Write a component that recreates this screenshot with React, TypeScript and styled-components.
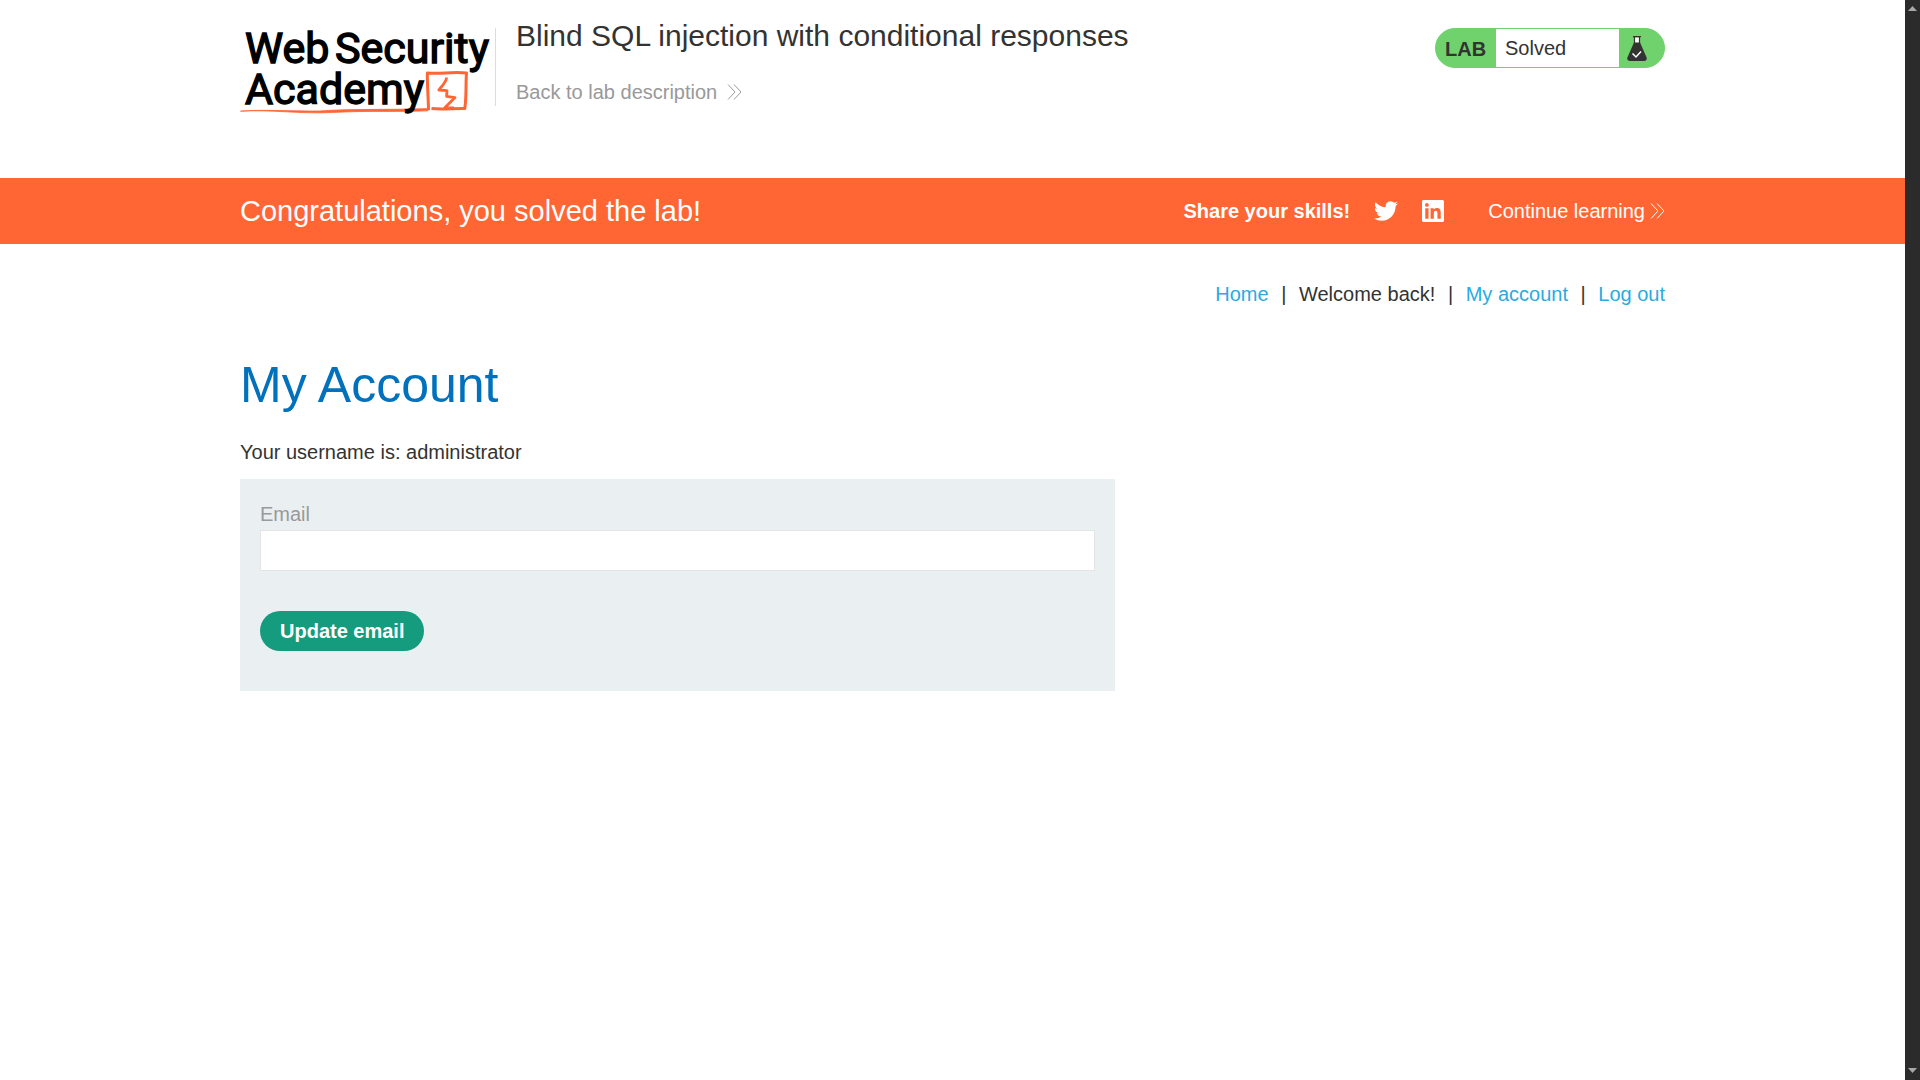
import React from "react";
import styled, { createGlobalStyle } from "styled-components";

const ink = "#333332";
const orange = "#ff6633";
const green = "#70d26c";
const skyBlue = "#29abe2";

const GlobalStyle = createGlobalStyle`
  *, *::before, *::after { box-sizing: border-box; }
  body {
    margin: 0;
    background: #fff;
    color: ${ink};
    font: 20px/30px "Liberation Sans", Arial, sans-serif;
  }
`;

const Shell = styled.div`
  display: grid;
  grid-template-columns: minmax(0, 1fr) 15px;
  min-height: 100vh;
`;

const Page = styled.div`
  min-width: 0;
`;

const Container = styled.div`
  max-width: 1425px;
  margin: 0 auto;
`;

const Header = styled(Container).attrs({ as: "header" })`
  display: flex;
  align-items: flex-start;
  padding: 18px 0 62px;
`;

const LogoLink = styled.a`
  display: flex;
  flex: none;
  margin-top: 10px;
`;

const LogoText = styled.text`
  font-family: Roboto, "Open Sans", sans-serif;
  font-size: 43px;
  fill: #000;
  stroke: #000;
  stroke-width: 1.4px;
`;

const TitleArea = styled.div`
  flex: 1;
  display: flex;
  margin-left: 5px;
`;

const Divider = styled.span`
  width: 1px;
  height: 78px;
  margin: 10px 20px 0 0;
  background: #dcdcdc;
`;

const Titles = styled.div`
  display: flex;
  flex-direction: column;
  align-items: flex-start;
  gap: 23px;
`;

const LabTitle = styled.h2`
  margin: 0;
  font-size: 30px;
  line-height: 36px;
  font-weight: 400;
`;

const BackLink = styled.a`
  display: flex;
  align-items: center;
  gap: 10px;
  color: #999;
  text-decoration: none;
`;

const Status = styled.div`
  display: flex;
  width: 230px;
  height: 40px;
  margin-top: 10px;
  border: 1px solid ${green};
  border-radius: 20px;
  background: ${green};
  overflow: hidden;
  line-height: 38px;
`;

const StatusTag = styled.strong`
  width: 60px;
  padding-left: 9px;
  line-height: 40px;
`;

const StatusText = styled.span`
  flex: 1;
  padding-left: 9px;
  background: #fff;
`;

const StatusIcon = styled.span`
  width: 45px;
  padding: 7px 0 0 8px;
  line-height: 0;
`;

const Banner = styled.section`
  background: ${orange};
  color: #fff;
`;

const BannerRow = styled(Container)`
  display: flex;
  align-items: center;
  justify-content: space-between;
  min-height: 66px;
`;

const BannerTitle = styled.h4`
  margin: 0;
  font-size: 29px;
  line-height: 36px;
  font-weight: 400;
`;

const Share = styled.div`
  display: flex;
  align-items: center;
`;

const SocialLink = styled.a`
  display: flex;
  margin-left: 24px;
  color: #fff;
`;

const ContinueLink = styled.a`
  display: flex;
  align-items: center;
  gap: 5px;
  margin-left: 44px;
  color: #fff;
  text-decoration: none;
`;

const Nav = styled(Container).attrs({ as: "nav" })`
  padding-top: 35px;
  text-align: right;
`;

const NavLink = styled.a`
  color: ${skyBlue};
  text-decoration: none;
`;

const Separator = styled.span`
  margin: 0 7px;
`;

const Main = styled(Container).attrs({ as: "main" })`
  padding-top: 46px;
`;

const Heading = styled.h1`
  margin: 0;
  color: #0071bc;
  font-size: 50px;
  line-height: 60px;
  font-weight: 400;
`;

const Username = styled.p`
  margin: 22px 0 12px;
`;

const Form = styled.form`
  display: flex;
  flex-direction: column;
  align-items: flex-start;
  max-width: 875px;
  padding: 20px 20px 40px;
  background: #eaeff2;
`;

const Label = styled.label`
  color: #999;
`;

const EmailInput = styled.input`
  width: 100%;
  height: 41px;
  margin: 1px 0 40px;
  padding: 0 10px;
  border: 1px solid #e4e4e4;
  background: #fff;
  color: ${ink};
  font: inherit;
`;

const SubmitButton = styled.button`
  height: 40px;
  padding: 0 20px;
  border: 0;
  border-radius: 20px;
  background: #159b7e;
  color: #fff;
  font: inherit;
  font-weight: 700;
  cursor: pointer;
`;

const ScrollRail = styled.aside`
  position: sticky;
  top: 0;
  display: flex;
  flex-direction: column;
  align-items: center;
  justify-content: space-between;
  height: 100vh;
  padding: 6px 0 7px;
  background: #2b2b2b;
`;

function Logo() {
  return (
    <svg width="250" height="88" viewBox="0 0 250 88" role="img" aria-label="Web Security Academy">
      <path d="M0.5 83.2 C30 81.4 60 86 90 84.6 C130 82.4 160 84.2 188 82.8 L188 80.6 C150 82 110 80.6 80 83 C50 83.4 20 81.2 0.5 83.2Z" fill={orange} stroke={orange} strokeWidth=".8" />
      <path d="M188.5 82 C188.3 68 187 55 187.4 45 C200 46 214 43.6 226.5 45 C225.6 57 226.6 68 224.8 80.6 C214 80.4 202 81.6 191.5 80.6" fill="none" stroke={orange} strokeWidth="3" strokeLinejoin="round" />
      <path d="M206.5 49.5 C206.5 54 202 58 198.8 62 L207 62.6 L206.6 68.4 L215 69.6 L205 79.6 L214 80" fill="none" stroke={orange} strokeWidth="2.8" strokeLinejoin="round" />
      <LogoText x="5" y="35">Web</LogoText>
      <LogoText x="95" y="35">Security</LogoText>
      <LogoText x="5" y="76">Academy</LogoText>
    </svg>
  );
}

function Chevrons() {
  return (
    <svg width="15" height="16" viewBox="0 0 15 16" fill="none" stroke="currentColor" strokeWidth="1" aria-hidden="true">
      <path d="M1 .5 8 8 1 15.5M7 .5 14 8 7 15.5" />
    </svg>
  );
}

function Flask() {
  return (
    <svg width="20" height="25" viewBox="0 0 20 25" aria-hidden="true">
      <path d="M7.5 1.5H12.5V7H7.5Z" fill="#fff" />
      <path d="M6 .7H14M7.5 1V8M12.5 1V8" stroke={ink} strokeWidth="1.2" fill="none" />
      <path d="M7 6.5H13L19.6 21.5Q20.4 25 17.5 25H2.5Q-.4 25 .4 21.5Z" fill={ink} />
      <path d="M5.5 17.5 9 21 14 15.5" stroke="#fff" strokeWidth="1.5" fill="none" />
    </svg>
  );
}

function Twitter() {
  return (
    <svg width="24" height="24" viewBox="0 0 24 24" fill="currentColor" aria-hidden="true">
      <path d="M23.95 4.57a10 10 0 0 1-2.82.77 4.96 4.96 0 0 0 2.16-2.72c-.95.55-2 .95-3.13 1.18a4.92 4.92 0 0 0-8.38 4.48C7.69 8.09 4.07 6.13 1.64 3.16a4.82 4.82 0 0 0-.67 2.48c0 1.71.87 3.21 2.19 4.1a4.9 4.9 0 0 1-2.23-.62v.06a4.92 4.92 0 0 0 3.95 4.83 5 5 0 0 1-2.21.08 4.94 4.94 0 0 0 4.6 3.42A9.87 9.87 0 0 1 0 19.54a13.99 13.99 0 0 0 7.55 2.21c9.05 0 14-7.5 14-13.98 0-.21 0-.42-.02-.63a9.94 9.94 0 0 0 2.42-2.57z" />
    </svg>
  );
}

function LinkedIn() {
  return (
    <svg width="22" height="22" viewBox="0 0 24 24" fill="currentColor" aria-hidden="true">
      <path d="M20.45 20.45h-3.56v-5.57c0-1.33-.02-3.04-1.85-3.04-1.85 0-2.13 1.45-2.13 2.94v5.67H9.35V9h3.41v1.56h.05c.48-.9 1.64-1.85 3.37-1.85 3.6 0 4.27 2.37 4.27 5.46v6.28zM5.34 7.43a2.06 2.06 0 1 1 0-4.12 2.06 2.06 0 0 1 0 4.12zM7.12 20.45H3.56V9h3.56v11.45zM22.22 0H1.77C.79 0 0 .77 0 1.73v20.54C0 23.23.79 24 1.77 24h20.45c.98 0 1.78-.77 1.78-1.73V1.73C24 .77 23.2 0 22.22 0z" />
    </svg>
  );
}

function ScrollArrow({ down }: { down?: boolean }) {
  return (
    <svg width="9" height="5" viewBox="0 0 9 5" fill="#a8a8a8" aria-hidden="true">
      <path d={down ? "M0 0H9L4.5 5Z" : "M0 5H9L4.5 0Z"} />
    </svg>
  );
}

export default function App() {
  return (
    <>
      <GlobalStyle />
      <Shell>
        <Page>
          <Header>
            <LogoLink href="#"><Logo /></LogoLink>
            <TitleArea>
              <Divider />
              <Titles>
                <LabTitle>Blind SQL injection with conditional responses</LabTitle>
                <BackLink href="#">Back to lab description <Chevrons /></BackLink>
              </Titles>
            </TitleArea>
            <Status>
              <StatusTag>LAB</StatusTag>
              <StatusText>Solved</StatusText>
              <StatusIcon><Flask /></StatusIcon>
            </Status>
          </Header>
          <Banner>
            <BannerRow>
              <BannerTitle>Congratulations, you solved the lab!</BannerTitle>
              <Share>
                <strong>Share your skills!</strong>
                <SocialLink href="#" aria-label="Twitter"><Twitter /></SocialLink>
                <SocialLink href="#" aria-label="LinkedIn"><LinkedIn /></SocialLink>
                <ContinueLink href="#">Continue learning <Chevrons /></ContinueLink>
              </Share>
            </BannerRow>
          </Banner>
          <Nav>
            <NavLink href="#">Home</NavLink> <Separator>|</Separator>{" "}
            <span>Welcome back!</span> <Separator>|</Separator>{" "}
            <NavLink href="#">My account</NavLink> <Separator>|</Separator>{" "}
            <NavLink href="#">Log out</NavLink>
          </Nav>
          <Main>
            <Heading>My Account</Heading>
            <Username>Your username is: administrator</Username>
            <Form onSubmit={(event) => event.preventDefault()}>
              <Label htmlFor="email">Email</Label>
              <EmailInput id="email" type="email" name="email" />
              <SubmitButton type="submit">Update email</SubmitButton>
            </Form>
          </Main>
        </Page>
        <ScrollRail>
          <ScrollArrow />
          <ScrollArrow down />
        </ScrollRail>
      </Shell>
    </>
  );
}
